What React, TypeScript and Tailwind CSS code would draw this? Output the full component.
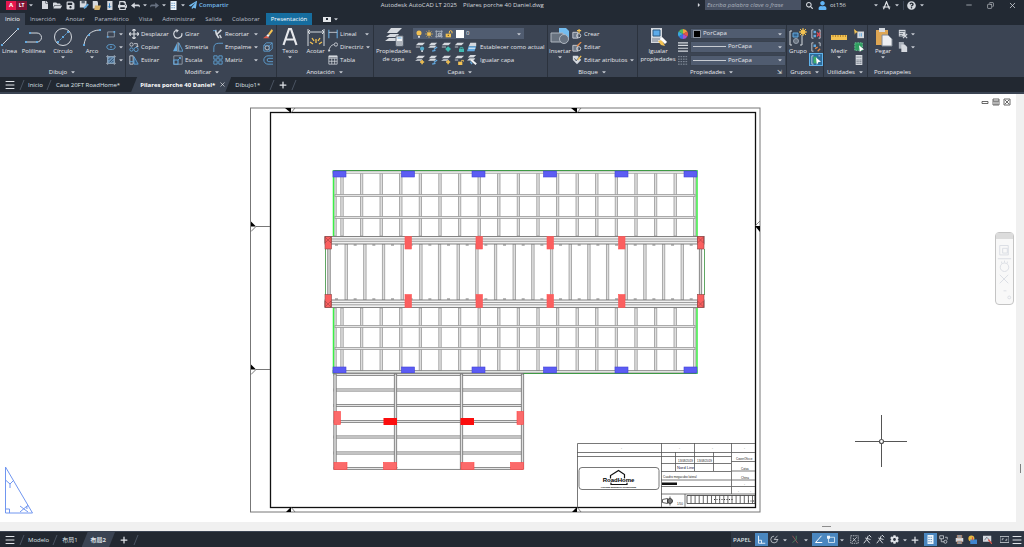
import React from 'react';
import {
  FaCaretDown,
  FaCaretRight,
  FaFolderOpen,
  FaFile,
  FaSave,
  FaPrint,
  FaPaperPlane,
  FaUser,
  FaSearch,
  FaQuestionCircle,
  FaCog,
} from 'react-icons/fa';
import { Menu, Plus, X, Minus, Copy } from 'lucide-react';

/* ---------- small drawings used by the ribbon ---------- */

const L = '#d5d9df';
const B = '#62a8de';
const Y = '#f3c253';

const icons: Record<string, React.ReactNode> = {
  rect: (
    <>
      <path d="M2 3.500h8v6H2z" stroke="#9aa3b0" />
      <path d="M1 8.500h2v2H1zM9 2.500h2v2H9z" fill={B} stroke="none" />
    </>
  ),
  ellipse: (
    <>
      <ellipse cx="6" cy="6" rx="5" ry="3" stroke={B} />
      <path d="M5 5.500h2v1H5zM5.500 5h1v2h-1z" fill={B} stroke="none" />
    </>
  ),
  hatch: (
    <>
      <path d="M2 2h8v8H2z" fill="#6b8fb3" stroke={B} />
      <path d="M0 2h12M0 10h12M2 0v12M10 0v12" stroke="#9aa3b0" />
      <path d="M3 6l3-3M4 9l5-5M7 9l2-2" stroke="#24405c" />
    </>
  ),
  move: <path d="M6 0v12M0 6h12M4 2l2-2 2 2M4 10l2 2 2-2M2 4L0 6l2 2M10 4l2 2-2 2" stroke={L} strokeWidth="1.4" />,
  copy: (
    <>
      <circle cx="3" cy="3" r="2" stroke={L} />
      <circle cx="3" cy="9" r="2" stroke={B} />
      <circle cx="8.500" cy="9" r="2.500" stroke={B} />
      <path d="M6 2h4v4M8.500 4.500L10 6l1.500-1.500" stroke={L} />
    </>
  ),
  stretch: (
    <>
      <path d="M1 1h4v10H1z" stroke={L} />
      <path d="M6 2l5 9H6z" fill="#34567a" stroke={B} />
      <path d="M1 8h4" stroke={B} />
    </>
  ),
  rotate: (
    <>
      <path d="M10.500 5A4.800 4.800 0 1 1 4 1.600" stroke={L} strokeWidth="1.400" />
      <path d="M3 0l4 1.500L4.500 4.500z" fill={L} stroke="none" />
    </>
  ),
  mirror: (
    <>
      <path d="M5 1v10H0z" fill={B} stroke="none" />
      <path d="M7 1v10h5z" stroke={B} />
      <path d="M6 0v12" stroke={L} strokeWidth=".7" />
    </>
  ),
  scale: (
    <>
      <path d="M1 1h10v10H1z" stroke="#9aa3b0" />
      <path d="M1 6h5v5H1z" stroke={B} strokeWidth="1.300" />
      <path d="M6 6l3-3M7 3h2v2" stroke={B} />
    </>
  ),
  trim: (
    <>
      <path d="M3 1l1 5 3 5M10 1L5 6" stroke={L} strokeWidth="2" />
      <path d="M8 7l2 4" stroke={L} strokeWidth="1.600" />
      <path d="M0 2h4" stroke={B} />
    </>
  ),
  fillet: <path d="M1 12V7q0-5.500 6-5.500h5" stroke={B} />,
  array: (
    <path d="M1 1h4v4H1zM7 1h4v4H7zM1 7h4v4H1zM7 7h4v4H7z" stroke={B} />
  ),
  erase: (
    <>
      <path d="M10.500 0L6 6l2 1.500L12 2z" fill={Y} stroke="none" />
      <path d="M6 6L4 8l2 2 2-2.500z" fill="#f4f4f4" stroke="none" />
      <path d="M0 11h8L4 8z" fill="#e25b4a" stroke="none" />
    </>
  ),
  explode: (
    <>
      <path d="M1 4l3-3h7v7l-3 3H1z" stroke={B} />
      <circle cx="5" cy="7" r="2.500" stroke={L} />
      <path d="M8 4v7M1 4h7l3-3" stroke={B} strokeWidth=".8" />
    </>
  ),
  offset: <path d="M12 1H6a5 5 0 0 0 0 10h6M12 4H7a2 2 0 0 0 0 4h5" stroke={B} />,
  linear: (
    <>
      <path d="M1 1v10M11 1v10" stroke={B} strokeWidth="1.300" />
      <path d="M1 4h10" stroke={L} />
    </>
  ),
  leader: (
    <>
      <path d="M1 11Q2 4 7 3" stroke={L} />
      <circle cx="9.500" cy="3" r="2" stroke={L} />
      <path d="M0 9l1 3 2-2z" fill={L} stroke="none" />
    </>
  ),
  table: (
    <>
      <path d="M1 1h10v10H1zM1 4h10M1 7.500h10M4.500 4v7M8 4v7" stroke={L} strokeWidth=".9" />
      <path d="M1 1h10v2H1z" fill={L} stroke="none" />
    </>
  ),
  layer: (
    <>
      <path d="M4 1h8l-3 3H1z" fill={L} stroke="none" />
      <path d="M1 6h5" stroke={L} />
      <circle cx="8.500" cy="8" r="2.500" fill="#55a9c9" stroke="none" />
      <path d="M7.500 10h2v2h-2z" fill={L} stroke="none" />
    </>
  ),
  layerTeal: (
    <>
      <path d="M4 1h8l-3 3H1z" fill={L} stroke="none" />
      <path d="M1 6h5" stroke={L} />
      <path d="M5 8.500L8.500 5 12 8.500 8.500 12z" fill="#41b9b1" stroke="none" />
    </>
  ),
  layerLock: (
    <>
      <path d="M4 1h8l-3 3H1z" fill={L} stroke="none" />
      <path d="M1 6h4" stroke={L} />
      <path d="M6 8h6v4H6z" fill="#41b9b1" stroke="none" />
      <path d="M7.500 8V6.500h3V8" stroke="#41b9b1" />
    </>
  ),
  layerUnlock: (
    <>
      <path d="M4 1h8l-3 3H1z" fill={L} stroke="none" />
      <path d="M1 6h4" stroke={L} />
      <path d="M5 8h5v4H5z" fill={Y} stroke="none" />
      <path d="M9 8V6.500h2.500V8" stroke={Y} />
    </>
  ),
  layerYellow: (
    <>
      <path d="M4 1h8l-3 3H1zM3 5h6L7 7H0z" fill={L} stroke="none" />
      <path d="M6 8.500h5M8.500 6v5" stroke={Y} strokeWidth="1.800" />
    </>
  ),
  layerBlue: (
    <>
      <path d="M4 1h7L8 4H1zM3 4.500h7L8 7H0z" fill={L} stroke="none" />
      <path d="M7 9l4-3M5 11l4-1" stroke={B} strokeWidth="1.600" />
    </>
  ),
  layerMatch: (
    <>
      <path d="M4 0h7L8 3H1zM3 4h7L8 6.500H0z" fill={L} stroke="none" />
      <path d="M5 6l6 5" stroke="#f2f3f5" strokeWidth="2.400" />
      <path d="M4 8l2 3" stroke={B} strokeWidth="1.600" />
    </>
  ),
  layerSet: (
    <>
      <path d="M4 1h7v4H2z" fill={L} stroke="none" />
      <path d="M2 5h9l-2 6H0z" fill={B} stroke="none" />
      <path d="M2 7.500h8" stroke="#fff" />
    </>
  ),
  bulb: (
    <>
      <circle cx="6" cy="4.500" r="3.800" fill={Y} stroke="none" />
      <path d="M4.500 9h3v2.500h-3z" fill={L} stroke="none" />
    </>
  ),
  sun: (
    <>
      <circle cx="6" cy="6" r="2.800" fill={Y} stroke="none" />
      <path d="M6 0v12M0 6h12M2 2l8 8M10 2l-8 8" stroke={Y} strokeWidth=".9" />
    </>
  ),
  viewport: (
    <>
      <path d="M2 2h8v8H2zM0 2h12M2 0v12M10 0v12M0 10h12" stroke="#a9b2bf" strokeWidth=".9" />
      <circle cx="7" cy="7" r="2.400" fill="#7b8796" stroke={L} />
    </>
  ),
  unlock: (
    <>
      <path d="M1 5.500h8V11H1z" fill={Y} stroke="none" />
      <path d="M6.500 5V3a2 2 0 0 1 4 0v2" stroke={Y} strokeWidth="1.500" />
      <path d="M4 7h2v2H4z" fill="#80601c" stroke="none" />
    </>
  ),
  blockNew: (
    <>
      <path d="M1 4h6v7H1z" fill="#6d7887" stroke={L} />
      <circle cx="8" cy="8" r="2.500" stroke={L} />
      <path d="M6 2h5M8.500 0v5" stroke={Y} strokeWidth="1.400" />
    </>
  ),
  blockEdit: (
    <>
      <path d="M1 4h6v7H1z" fill="#6d7887" stroke={L} />
      <circle cx="8" cy="8" r="2.500" stroke={L} />
      <path d="M6 5l5-5" stroke="#e58c4b" strokeWidth="1.600" />
    </>
  ),
  attr: (
    <>
      <path d="M1 1h6l4 5-5 5-5-5z" fill={L} stroke="none" />
      <path d="M3 4l2 3 5-6" stroke="#39424f" />
      <path d="M7 6l4-5" stroke={Y} strokeWidth="1.500" />
    </>
  ),
  weights: (
    <path d="M0 1h12M0 4h12M0 7.500h12M0 11h12" stroke={L} strokeWidth="1.400" />
  ),
  linetypes: (
    <path d="M0 2h12M0 5h12M0 8h12M0 11h12" stroke="#98a1ae" strokeDasharray="2 1" />
  ),
  ungroup: (
    <>
      <path d="M3 1H1v10h2M9 1h2v10H9" stroke={L} />
      <path d="M3 2h3v3H3zM3 7h3v3H3z" fill={B} stroke="none" />
      <path d="M7 4l4 5M11 4L7 9" stroke="#dd4a52" strokeWidth="1.500" />
    </>
  ),
  groupEdit: (
    <>
      <path d="M3 1H1v10h2M9 1h2v4" stroke={L} />
      <path d="M3 3h3v3H3z" fill={B} stroke="none" />
      <path d="M5 8l3-2M8 11l3-3" stroke="#e0864a" strokeWidth="1.600" />
    </>
  ),
  groupSel: (
    <>
      <path d="M3 1H1v10h2M9 1h2" stroke={L} />
      <path d="M3 2h4v8H3z" fill="#3fae6b" stroke="none" />
      <path d="M6 3l6 5-3 .5L7 12z" fill="#fff" stroke="none" />
    </>
  ),
  quickSel: (
    <>
      <path d="M4 3h8v8H4z" fill={L} stroke="none" />
      <path d="M0 0l5 4-3 .5L1 7z" fill={Y} stroke="none" />
      <path d="M7 5v4M9 5v4" stroke={B} />
    </>
  ),
  selectAll: (
    <>
      <path d="M1 1h9v9H1z" fill="#2f9d5f" stroke="#6fd39a" strokeDasharray="2 1" />
      <path d="M6 4l6 5-3 .5L7 12z" fill="#fff" stroke="none" />
    </>
  ),
  calc: (
    <>
      <path d="M2 0h8v12H2z" fill={L} stroke="none" />
      <path d="M3 2.500h6M3 6h6M3 8h6M3 10h6" stroke="#59636f" strokeDasharray="1.500 .7" />
    </>
  ),
  cut: (
    <>
      <path d="M1 1h8v8H1z" fill={L} stroke="none" />
      <path d="M2 3h6M2 5.500h4M2 8h3" stroke="#59636f" />
      <path d="M6 6l5 5M11 6l-5 5" stroke={L} strokeWidth="1.300" />
    </>
  ),
  paper2: (
    <>
      <path d="M1 0h6v8H1z" fill="#aab1bb" stroke="none" />
      <path d="M4 3h4l3 3v6H4z" fill={L} stroke="none" />
    </>
  ),
  saveAs: (
    <>
      <path d="M1 1h8v8H1z" fill={L} stroke="none" />
      <path d="M3 1h4v3H3z" fill="#59636f" stroke="none" />
      <path d="M6 10l5-5" stroke={B} strokeWidth="2.400" />
    </>
  ),
  openWeb: (
    <>
      <path d="M1 0h6l1 2v8H1z" fill={L} stroke="none" />
      <path d="M4 6h8l-2 6H3z" fill="#d8b36a" stroke="none" />
    </>
  ),
  saveWeb: (
    <>
      <path d="M3 0h7v12H3z" fill={L} stroke="none" />
      <path d="M6 3v6M4 7l2 2 2-2" stroke="#2f80c4" strokeWidth="1.300" />
    </>
  ),
  undo: <path d="M0 6l5-4v2.500h5q2 0 2 4-1-1.500-3-1.500H5V10z" fill={L} stroke="none" />,
  redo: <path d="M12 6L7 2v2.500H2q-2 0-2 4 1-1.500 3-1.500h4V10z" fill="#667080" stroke="none" />,
  corner: <path d="M2 1v10h9M2 7h4v4" stroke="#eef5fb" strokeWidth="1.200" />,
  polar: (
    <>
      <path d="M10 6a4.500 4.500 0 1 1-4.500-4.500M5.500 6L10 1M5.500 6H11" stroke={L} />
    </>
  ),
  iso: (
    <>
      <path d="M2 1l7 10" stroke="#b3605e" />
      <path d="M7 1v5l-5 4" stroke="#56946a" />
    </>
  ),
  track: <path d="M10 1L2 10h9" stroke="#fff" strokeWidth="1.300" />,
  osnap: (
    <>
      <path d="M2 3h8v7H2z" stroke="#eef5fb" />
      <path d="M0 1h4v4H0z" fill="#eef5fb" stroke="none" />
    </>
  ),
  annoVis: (
    <>
      <path d="M1 1h10v10H1z" stroke={L} strokeDasharray="2 1" />
      <path d="M3 9l6-6M4 4l4 5" stroke={L} />
    </>
  ),
  person: (
    <>
      <path d="M7 1L5 6l-4 5M5 6l4 5M3 4l7 2M8 0l3 3" stroke={L} strokeWidth="1.300" />
    </>
  ),
  sheet: (
    <>
      <path d="M2 0h8v12H2z" fill="#eef5fb" stroke="none" />
      <path d="M3 3h6M3 6h6M3 9h6" stroke="#4a82b7" strokeDasharray="2 1" />
    </>
  ),
  nodes: (
    <>
      <path d="M1 1h5v4H1zM8 3h3v3M3 5v4h4" stroke={L} />
      <circle cx="8.500" cy="9" r="2" stroke={L} />
    </>
  ),
  globe: (
    <>
      <circle cx="4.500" cy="4.500" r="4" fill="#e6b942" stroke="none" />
      <path d="M3 6h9v6H3z" fill="#3f86cf" stroke="none" />
      <path d="M6 3v4" stroke="#d95448" strokeWidth="1.500" />
    </>
  ),
  image: (
    <>
      <path d="M0 1h11v8H0z" fill={L} stroke="none" />
      <path d="M2 7l3-4 3 3" stroke="#59636f" />
      <path d="M7 6l5 6" stroke="#d95448" strokeWidth="1.600" />
    </>
  ),
  clean: (
    <>
      <path d="M0 2h12v8H0z" stroke={L} />
      <path d="M3 7V5h2M9 5v2H7" stroke={L} />
    </>
  ),
  plot: (
    <>
      <path d="M1 4h10v5H1z" fill={L} stroke="none" />
      <path d="M3 0h6v4H3zM3 8h6v4H3z" fill="#8d97a4" stroke="#d98c5a" strokeWidth=".7" />
    </>
  ),
};

function Icon({ name, className = 'size-[10px]' }: { name: string; className?: string }) {
  return (
    <svg viewBox="0 0 12 12" fill="none" className={`shrink-0 ${className}`} aria-hidden="true">
      {icons[name]}
    </svg>
  );
}

function Caret({ className = '' }: { className?: string }) {
  return <FaCaretDown className={`size-[6px] shrink-0 text-[#c3c8d0] ${className}`} />;
}

/* ---------- ribbon building blocks ---------- */

function Panel({ title, className, arrow = true, corner = false, children }: {
  title: string;
  className: string;
  arrow?: boolean;
  corner?: boolean;
  children: React.ReactNode;
}) {
  return (
    <section className={`flex shrink-0 flex-col border-r border-[#2b323d] pt-[2px] ${className}`}>
      <div className="flex h-[39px]">{children}</div>
      <div className="flex h-[11px] items-center justify-center gap-[3px]">
        <span>{title}</span>
        {arrow && <Caret />}
        {corner && <span className="absolute right-1">⇲</span>}
      </div>
    </section>
  );
}

function BigButton({ label, arrow, className, children }: {
  label: string;
  arrow?: boolean;
  className: string;
  children: React.ReactNode;
}) {
  return (
    <button className={`flex shrink-0 flex-col items-center ${className}`}>
      <svg viewBox="0 0 20 20" fill="none" className="size-[20px] shrink-0">{children}</svg>
      <span className="leading-[8px]">{label}</span>
      {arrow && <Caret className="-my-px" />}
    </button>
  );
}

function Row({ icon, label, arrow }: { icon: string; label?: string; arrow?: boolean }) {
  return (
    <button className="flex h-[13px] items-center gap-[2px] whitespace-nowrap">
      <Icon name={icon} />
      {label && <span>{label}</span>}
      {arrow && <Caret className="ml-auto" />}
    </button>
  );
}

function Column({ className, children }: { className: string; children: React.ReactNode }) {
  return <div className={`flex shrink-0 flex-col ${className}`}>{children}</div>;
}

function PropSelect({ label, line }: { label: string; line?: boolean }) {
  return (
    <div className="flex h-[11px] flex-1 items-center border border-[#39424f] bg-[#505c70] px-[2px]">
      {line ? <span className="h-px w-[33px] bg-[#c8ccd2]" /> : <span className="size-[8px] border border-[#8a929e] bg-black" />}
      <select aria-label={label} className="min-w-0 flex-1 appearance-none bg-transparent pl-[2px] leading-[9px] outline-none">
        <option>PorCapa</option>
      </select>
      <Caret />
    </div>
  );
}

function Ribbon() {
  return (
    <div className="flex h-[52px] bg-[#3b4453] text-[#e6e8ec]">
      <Panel title="Dibujo" className="w-[126px]">
        <BigButton label="Línea" className="w-[19px]">
          <path d="M2 18L18 2" stroke={L} />
          <path d="M1 17h2v2H1zM17 1h2v2h-2z" fill={B} />
        </BigButton>
        <BigButton label="Polilínea" className="w-[29px]">
          <path d="M2 15h11a4 4 0 0 0 0-9H6" stroke={L} />
          <path d="M1 14h2v2H1zM12 14h2v2h-2zM5 5h2v2H5z" fill={B} />
        </BigButton>
        <BigButton label="Círculo" arrow className="w-[30px]">
          <circle cx="10" cy="10" r="8.500" stroke={L} />
          <path d="M5 15L15 5" stroke={B} strokeDasharray="2 1" />
          <path d="M9 9h2v2H9zM14 4h2v2h-2zM4 14h2v2H4z" fill={B} />
        </BigButton>
        <BigButton label="Arco" arrow className="w-[28px]">
          <path d="M2 18C3 9 9 3 18 3" stroke={L} />
          <path d="M1 17h2v2H1zM6 7h2v2H6zM17 2h2v2h-2z" fill={B} />
        </BigButton>
        <Column className="w-[18px]">
          <Row icon="rect" arrow />
          <Row icon="ellipse" arrow />
          <Row icon="hatch" arrow />
        </Column>
      </Panel>

      <Panel title="Modificar" className="w-[151px] pl-[3px]">
        <Column className="w-[44px]">
          <Row icon="move" label="Desplazar" />
          <Row icon="copy" label="Copiar" />
          <Row icon="stretch" label="Estirar" />
        </Column>
        <Column className="w-[40px]">
          <Row icon="rotate" label="Girar" />
          <Row icon="mirror" label="Simetría" />
          <Row icon="scale" label="Escala" />
        </Column>
        <Column className="mr-[4px] w-[46px]">
          <Row icon="trim" label="Recortar" arrow />
          <Row icon="fillet" label="Empalme" arrow />
          <Row icon="array" label="Matriz" arrow />
        </Column>
        <Column className="w-[11px]">
          <Row icon="erase" />
          <Row icon="explode" />
          <Row icon="offset" />
        </Column>
      </Panel>

      <Panel title="Anotación" className="w-[97px]">
        <BigButton label="Texto" arrow className="w-[26px]">
          <path d="M3.500 18L9 2h2l5.500 16M6 12.500h8" stroke="#e6e8ec" strokeWidth="2.200" />
        </BigButton>
        <BigButton label="Acotar" className="w-[25px]">
          <path d="M2 2v17M18 2v17M2 5h16M4 3L2 5l2 2M16 3l2 2-2 2" stroke={L} />
          <path d="M10 16v-4M7 17l-3-2M13 17l3-2M8 14l-2-3M12 14l2-3" stroke={Y} strokeWidth="1.300" />
        </BigButton>
        <Column className="w-[42px]">
          <Row icon="linear" label="Lineal" arrow />
          <Row icon="leader" label="Directriz" arrow />
          <Row icon="table" label="Tabla" />
        </Column>
      </Panel>

      <Panel title="Capas" className="w-[174px]">
        <BigButton label="Propiedades de capa" className="w-[39px]">
          <path d="M7 1h11l-5 5H3zM6 7h9l-2 3H2zM5 11h7v3H1z" fill={L} />
          <path d="M12 9h7v10h-7z" fill="#f1f3f5" stroke="#66707e" />
          <path d="M13.500 11h4" stroke={B} />
          <path d="M13 15h5M13 17h5" stroke="#66707e" />
        </BigButton>
        <Column className="flex-1">
          <div className="flex h-[13px] items-center">
            <div className="flex h-[11px] w-[111px] items-center gap-[2px] bg-[#505c70] px-[2px]">
              <Icon name="bulb" className="size-[8px]" />
              <Icon name="sun" className="size-[8px]" />
              <Icon name="viewport" className="size-[8px]" />
              <Icon name="unlock" className="mr-px size-[8px]" />
              <span className="size-[8px] shrink-0 bg-white" />
              <select aria-label="Capa actual" className="min-w-0 flex-1 appearance-none bg-transparent leading-[9px] outline-none">
                <option>0</option>
              </select>
              <Caret />
            </div>
          </div>
          <div className="flex h-[13px] items-center gap-[3px] pl-[2px] whitespace-nowrap">
            <Icon name="layer" />
            <Icon name="layerBlue" />
            <Icon name="layerTeal" />
            <Icon name="layerLock" />
            <Icon name="layerSet" />
            <span>Establecer como actual</span>
          </div>
          <div className="flex h-[13px] items-center gap-[3px] pl-[2px] whitespace-nowrap">
            <Icon name="layerYellow" />
            <Icon name="layerBlue" />
            <Icon name="layerYellow" />
            <Icon name="layerUnlock" />
            <Icon name="layerMatch" />
            <span>Igualar capa</span>
          </div>
        </Column>
      </Panel>

      <Panel title="Bloque" className="w-[90px]">
        <BigButton label="Insertar" arrow className="w-[24px]">
          <path d="M9 1h7l3 3v8H9z" fill="#74bdf0" />
          <path d="M1 6h12v9H1z" fill="#68727f" stroke="#aeb5bf" />
          <circle cx="14" cy="12" r="4.500" fill="#68727f" stroke="#aeb5bf" />
        </BigButton>
        <Column className="w-[63px]">
          <Row icon="blockNew" label="Crear" />
          <Row icon="blockEdit" label="Editar" />
          <Row icon="attr" label="Editar atributos" arrow />
        </Column>
      </Panel>

      <Panel title="Propiedades" corner className="relative w-[149px]">
        <BigButton label="Igualar propiedades" className="w-[40px]">
          <path d="M3 1h11v15H3z" fill={L} />
          <path d="M5 3h7v6H5z" fill="#5cabea" stroke="#2c5a82" />
          <path d="M4 12h8M4 14h6" stroke="#77808d" />
          <path d="M10 14l3 4 4 1-3-6z" fill={Y} />
          <path d="M13 11l5 5" stroke="#fff" strokeWidth="3" />
        </BigButton>
        <Column className="w-[12px]">
          <div className="flex h-[13px] items-center">
            <svg viewBox="0 0 12 12" className="size-[10px]">
              <path d="M6 6V0a6 6 0 0 1 5.200 3z" fill="#f0a33c" />
              <path d="M6 6l5.200-3a6 6 0 0 1 0 6z" fill="#e25649" />
              <path d="M6 6l5.200 3A6 6 0 0 1 6 12z" fill="#a750c9" />
              <path d="M6 6v6A6 6 0 0 1 .8 9z" fill="#3a72df" />
              <path d="M6 6L.8 9a6 6 0 0 1 0-6z" fill="#37aadd" />
              <path d="M6 6L.8 3A6 6 0 0 1 6 0z" fill="#51ba60" />
            </svg>
          </div>
          <Row icon="weights" />
          <Row icon="linetypes" />
        </Column>
        <div className="flex flex-1 flex-col gap-[2px] pt-px">
          <PropSelect label="Color de objeto" />
          <PropSelect label="Grosor de línea" line />
          <PropSelect label="Tipo de línea" line />
        </div>
      </Panel>

      <Panel title="Grupos" className="w-[37px]">
        <BigButton label="Grupo" className="w-[22px]">
          <path d="M4 4H2v14h2M14 8v10h-2" stroke={L} />
          <path d="M5 6h5v4H5z" fill="#35628c" stroke={B} />
          <circle cx="8" cy="14" r="2.500" fill="#6a7481" stroke="#98a1ae" />
          <path d="M15 1v8M11 5h8M12 2l6 6M18 2l-6 6" stroke={Y} />
          <circle cx="15" cy="5" r="2.500" fill={Y} />
        </BigButton>
        <Column className="w-[14px] items-center">
          <Row icon="ungroup" />
          <Row icon="groupEdit" />
          <span className="flex h-[13px] items-center border border-[#5fb3ec] bg-[#2e6d9c] px-px"><Row icon="groupSel" /></span>
        </Column>
      </Panel>

      <Panel title="Utilidades" className="w-[44px]">
        <BigButton label="Medir" arrow className="w-[30px]">
          <path d="M2 8h16v5H2z" fill={Y} />
          <path d="M4 8v2M6.500 8v2M9 8v2M11.500 8v2M14 8v2M16.500 8v2" stroke="#9c6c17" strokeWidth=".7" />
        </BigButton>
        <Column className="w-[12px]">
          <Row icon="quickSel" />
          <Row icon="selectAll" />
          <Row icon="calc" />
        </Column>
      </Panel>

      <section className="flex flex-1 flex-col pt-[2px]">
        <div className="flex h-[39px]">
          <BigButton label="Pegar" arrow className="w-[30px]">
            <path d="M3 3h12v15H3z" fill="#dda654" />
            <path d="M6 1h6v4H6z" fill={L} />
            <path d="M9 8h6l4 4v7H9z" fill="#edeff2" stroke="#828b97" />
          </BigButton>
          <Column className="w-[17px]">
            <Row icon="cut" arrow />
            <Row icon="paper2" arrow />
          </Column>
        </div>
        <div className="flex h-[11px] items-center pl-[6px]">Portapapeles</div>
      </section>
    </div>
  );
}

/* ---------- title bar and menu ---------- */

function QuickButton({ label, children }: { label: string; children: React.ReactNode }) {
  return (
    <button aria-label={label} className="flex w-[13px] items-center justify-center">{children}</button>
  );
}

function TitleBar() {
  return (
    <header className="flex h-[12px] items-center overflow-hidden pb-[2px] text-[#d5d9df]">
      <div className="flex items-center pl-[6px]">
        <div className="flex h-[9px] w-[21px] items-center text-[6px] font-bold text-white">
          <span className="flex h-full w-[10px] items-center justify-center bg-[#e5184f]">A</span>
          <span className="flex h-full flex-1 items-center justify-center bg-[#7f1436] text-[5px]">LT</span>
        </div>
        <Caret className="mr-[4px] ml-px" />
        <QuickButton label="Nuevo"><FaFile className="size-[8px]" /></QuickButton>
        <QuickButton label="Abrir"><FaFolderOpen className="size-[9px]" /></QuickButton>
        <QuickButton label="Guardar"><FaSave className="size-[9px]" /></QuickButton>
        <QuickButton label="Guardar como"><Icon name="saveAs" /></QuickButton>
        <QuickButton label="Abrir desde web"><Icon name="openWeb" className="size-[9px]" /></QuickButton>
        <QuickButton label="Guardar en web"><Icon name="saveWeb" className="size-[9px]" /></QuickButton>
        <QuickButton label="Trazar"><FaPrint className="size-[9px]" /></QuickButton>
        <QuickButton label="Deshacer"><Icon name="undo" className="size-[9px]" /></QuickButton>
        <Caret />
        <QuickButton label="Rehacer"><Icon name="redo" className="size-[9px]" /></QuickButton>
        <Caret />
        <QuickButton label="Hojas"><Icon name="sheet" className="size-[9px]" /></QuickButton>
        <Caret className="mr-[3px]" />
        <button className="flex items-center gap-[2px] font-semibold text-[#72b9ee]">
          <FaPaperPlane className="size-[8px]" />
          Compartir
        </button>
      </div>
      <h1 className="flex flex-1 justify-center gap-[6px] whitespace-nowrap">
        <span>Autodesk AutoCAD LT 2025</span>
        <span>Pilares porche 40 Daniel.dwg</span>
      </h1>
      <div className="flex items-center gap-[3px] pr-[7px]">
        <FaCaretRight className="size-[6px]" />
        <input
          aria-label="Buscar"
          placeholder="Escriba palabra clave o frase"
          className="h-[10px] w-[96px] bg-[#485163] px-[2px] italic outline-none placeholder:text-[#a9b0bb]"
        />
        <FaSearch className="mx-[2px] size-[7px]" />
        <FaUser className="size-[9px] text-[#62b4f5]" />
        <span className="w-[40px]">ot156</span>
        <Caret />
        <svg viewBox="0 0 12 12" fill="none" className="size-[9px]">
          <path d="M2 11L6 1l4 10M1 8h10" stroke="#e6e8ec" strokeWidth="1.500" />
        </svg>
        <Caret />
        <span className="h-[9px] w-px bg-[#3b4453]" />
        <FaQuestionCircle className="size-[9px]" />
        <Caret className="mr-[37px]" />
        <button aria-label="Minimizar"><Minus className="size-[8px]" /></button>
        <button aria-label="Restaurar" className="mx-[11px]"><Copy className="size-[7px] -scale-x-100" /></button>
        <button aria-label="Cerrar"><X className="size-[9px]" /></button>
      </div>
    </header>
  );
}

const menuTabs = ['Inserción', 'Anotar', 'Paramétrico', 'Vista', 'Administrar', 'Salida', 'Colaborar'];

function MenuTabs() {
  return (
    <nav className="flex h-[13px] items-end text-[#b9bfc9]">
      <button className="h-[12px] bg-[#3b4453] px-[5px] text-white">Inicio</button>
      {menuTabs.map((t) => (
        <button key={t} className="h-[12px] px-[5px]">{t}</button>
      ))}
      <button className="ml-px h-[12px] bg-[#166d9f] px-[5px] text-white">Presentación</button>
      <button aria-label="Minimizar cinta" className="ml-[11px] flex h-[12px] items-center gap-[2px]">
        <span className="flex h-[5px] w-[8px] items-center justify-center bg-[#e1e4e8]">
          <span className="size-[2px] bg-[#222933]" />
        </span>
        <Caret />
      </button>
    </nav>
  );
}

function Slash() {
  return (
    <svg viewBox="0 0 6 10" fill="none" className="h-[10px] w-[6px] shrink-0">
      <path d="M1 10L5 0" stroke="#4a5362" />
    </svg>
  );
}

const slanted = '[clip-path:polygon(6px_0,100%_0,calc(100%-6px)_100%,0_100%)]';

function DocumentTabs() {
  return (
    <nav className="flex h-[17px] items-center border-b-2 border-[#3b4453] bg-[#222831] text-[#dfe2e7]">
      <button aria-label="Menú" className="mr-[3px] ml-[4px]"><Menu className="size-[12px]" /></button>
      <Slash />
      <button className="px-[3px]">Inicio</button>
      <Slash />
      <button className="px-[4px]">Casa 20FT RoadHome*</button>
      <div className={`ml-[7px] flex h-full items-center gap-[4px] bg-[#3b4453] pr-[5px] pl-[9px] font-bold text-white ${slanted}`}>
        <button>Pilares porche 40 Daniel*</button>
        <button aria-label="Cerrar pestaña"><X className="size-[7px]" /></button>
      </div>
      <button className="pr-[9px] pl-[4px]">Dibujo1*</button>
      <Slash />
      <button aria-label="Nuevo dibujo" className="px-[3px]"><Plus className="size-[10px]" strokeWidth={3} /></button>
      <Slash />
    </nav>
  );
}

/* ---------- drawing sheet ---------- */

const roofBeams = [342, ...Array.from({ length: 18 }, (_, i) => 361.6 + i * 19.6)];
const midBeams = Array.from({ length: 19 }, (_, i) => 346.2 + i * 18.67);
const bluePosts = [333, 401.500, 472, 543.500, 615, 684];
const redPosts = [325, 405, 476, 547, 618.500, 697.500];

function VBeam({ x, y1, y2, dark }: { x: number; y1: number; y2: number; dark?: boolean }) {
  return <rect x={x - 1.2} y={y1} width="2.400" height={y2 - y1} fill="#dedede" stroke={dark ? '#707070' : '#9a9a9a'} strokeWidth=".8" />;
}

function HBeam({ y, x1, x2, dark }: { y: number; x1: number; x2: number; dark?: boolean }) {
  return <rect x={x1} y={y - 1.1} width={x2 - x1} height="2.200" fill="#e4e4e4" stroke={dark ? '#777' : '#9a9a9a'} strokeWidth=".8" />;
}

function Sheet() {
  return (
    <svg viewBox="0 94 1016 428" className="h-full w-full" fontFamily="'Liberation Sans', sans-serif">
      {/* paper frame with centring marks */}
      <rect x="250.500" y="108" width="509.500" height="404" fill="none" stroke="#777" />
      <rect x="270.500" y="112.500" width="485" height="395" fill="none" stroke="#111" strokeWidth="1.300" />
      {[291, 577].map((x) => (
        <g key={x}>
          <path d={`M${x - 6} 108h6v5z`} />
          <path d={`M${x} 113l4-5`} stroke="#555" strokeWidth=".7" />
          <path d={`M${x - 5} 512l5-5v5z`} />
          <path d={`M${x} 507l4 5`} stroke="#555" strokeWidth=".7" />
        </g>
      ))}
      {[226.500, 369.500].map((y) => (
        <g key={y}>
          <path d={`M251 ${y - 5}l5 5h-5z`} />
          <path d={`M251 ${y + 5}l5-5H270`} fill="none" stroke="#555" strokeWidth=".8" />
        </g>
      ))}
      <path d="M760 226v6l-5-6z" />
      <path d="M755 226l5-5" stroke="#555" strokeWidth=".7" />

      {/* upper and lower roof bays */}
      {roofBeams.map((x) => (
        <g key={x}>
          <VBeam x={x} y1={173} y2={236} />
          <VBeam x={x} y1={308} y2={371} />
        </g>
      ))}
      <VBeam x={335} y1={173} y2={236} />
      <VBeam x={335} y1={308} y2={371} />
      {[195.500, 217.500, 326.500, 348.500].map((y) => (
        <HBeam key={y} y={y} x1={335} x2={695} />
      ))}
      <rect x="333" y="171" width="364" height="2.500" fill="#e2e5e2" stroke="#999" strokeWidth=".6" />
      <rect x="333" y="370.500" width="364" height="2.500" fill="#e2e5e2" stroke="#777" strokeWidth=".7" />
      <path d="M333 170.500h364M523 373.500h174" stroke="#3f9a45" />
      <path d="M333.500 170v66M333.500 308v66M697 170v66M697 308v66" stroke="#3cf046" strokeWidth="1.500" />

      {/* central corridor */}
      {midBeams.map((x) => (
        <VBeam key={x} x={x} y1={244} y2={300} />
      ))}
      <VBeam x={329} y1={244} y2={300} dark />
      <VBeam x={700.500} y1={244} y2={300} dark />
      {[236.500, 300].map((y) => (
        <g key={y}>
          <rect x="325" y={y} width="379" height="7.500" fill="#f1f1f1" stroke="#777" strokeWidth=".9" />
          <path d={`M325 ${y + 2.500}h379M325 ${y + 4.800}h379`} stroke="#8c8c8c" strokeWidth=".8" />
        </g>
      ))}
      <path d="M335 245h365M335 299h365" stroke="#777" strokeDasharray="3 15.670" />
      <path d="M325.500 249v46M704.500 249v46" stroke="#4e9d52" strokeWidth=".9" />

      {/* posts */}
      {bluePosts.map((x) => (
        <g key={x} fill="#5c5cf4" stroke="#4343d8" strokeWidth=".6">
          <rect x={x} y="171" width="13" height="6" />
          <rect x={x} y="367" width="13" height="6" />
        </g>
      ))}
      {redPosts.map((x, i) => (
        <g key={x} fill="#fb5f5f" stroke={i % 5 ? '#f55' : '#8c4444'} strokeWidth=".6">
          <rect x={x} y="236.500" width="6.500" height="12.500" />
          <rect x={x} y="294.500" width="6.500" height="13" />
        </g>
      ))}
      {[325, 697.500].map((x) => (
        <path key={x} d={`M${x} 237l6 6v-6l-6 6zM${x} 301l6 6v-6l-6 6z`} fill="none" stroke="#a04444" strokeWidth=".6" />
      ))}

      {/* terrace */}
      {[374.500, 390, 405.500, 421.500, 437, 453, 468.500].map((y) => (
        <HBeam key={y} y={y} x1={334} x2={522.500} dark />
      ))}
      <path d="M397.500 467h63v1.800h-63z" fill="#fff" />
      {[335, 395.500, 461.500, 522.500].map((x) => (
        <VBeam key={x} x={x} y1={374} y2={469} dark />
      ))}
      <g fill="#fb6a6a" stroke="#f44" strokeWidth=".6">
        {[334, 517].map((x) => (
          <rect key={x} x={x} y="411.500" width="6.500" height="13" />
        ))}
        {[334, 383.500, 461, 510.500].map((x) => (
          <rect key={x} x={x} y="462.500" width="13" height="7" />
        ))}
      </g>
      <g fill="#fb0d0d">
        <rect x="383.500" y="418" width="13.500" height="7" />
        <rect x="460.500" y="418" width="13.500" height="7" />
      </g>

      {/* title block */}
      <g fill="none" stroke="#555" strokeWidth=".8">
        <path d="M577.500 507V443.500H755M577 452.500h154.500M577 456.500h154.500M661.500 443v64M675.500 452v19M694.500 443v28M713.500 452v19M731.500 443v51" />
        <path d="M661 463.500h70M661 471.500h70M661 480h70M661 486.500h70M661 494h94M731.500 452.500H755M731.500 461.500H755M731.500 471H755M731.500 480H755M731.500 486.500H755M685 494v13" />
        <rect x="579" y="467.500" width="80" height="22" rx="3" />
      </g>
      <path d="M610.500 478.500v-3l8-5 6 4v4M611 482.500v2h16v-2" fill="none" stroke="#111" strokeWidth="1.200" />
      <text x="618.500" y="481.500" textAnchor="middle" fontSize="6" fontWeight="700" stroke="#fff" strokeWidth=".8" paintOrder="stroke">RoadHome</text>
      <text x="618.500" y="488" textAnchor="middle" fontSize="2" fontWeight="700">Viviendas modulares y prefabricadas</text>
      <g fontSize="3" fill="#222">
        <text x="678" y="461.500">13/08/2019</text>
        <text x="697" y="461.500">13/08/2019</text>
        <text x="677" y="469" fontSize="4" fill="#224">Nord Line</text>
        <text x="663" y="478">Cuadro megacubo lateral</text>
        <text x="736" y="460">CoverOficce</text>
        <text x="741" y="469.500">Cotas</text>
        <text x="741" y="478.500">China</text>
        <text x="677" y="505">1/50</text>
        <text x="621" y="449">-</text>
        <text x="679" y="449">-</text>
        <text x="712" y="449">-</text>
        <text x="744" y="449">-</text>
        <text x="744" y="485">-</text>
        <text x="738" y="492">-</text>
        <text x="750" y="492">-</text>
      </g>
      <path d="M662 482.500h15v2.500h-15z" fill="#111" />
      <path d="M662.500 499.500l5-1v5l-5-1zM670 496.500v9M667 501h6" fill="none" stroke="#333" strokeWidth=".8" />
      <circle cx="670" cy="501" r="2.500" fill="#777" stroke="#222" strokeWidth=".7" />
      <path d="M687 495.500h68v8h-68z" fill="none" stroke="#333" strokeWidth=".8" />
      {Array.from({ length: 16 }, (_, i) => (
        <path key={i} d={`M${691 + i * 4.1} 495.500v8`} stroke="#444" strokeWidth=".8" />
      ))}
      <path d="M714 499.500h20M748 501h7" stroke="#333" strokeDasharray="1 1.500" />
    </svg>
  );
}

function Canvas() {
  return (
    <main className="flex min-h-0 flex-1 flex-col bg-white">
      <div className="flex min-h-0 flex-1">
        <div className="relative min-w-0 flex-1">
          <Sheet />
          <div className="absolute top-[4px] right-[5px] flex items-center gap-[3px] text-[#444]">
            <button aria-label="Minimizar vista"><svg viewBox="0 0 8 8" fill="none" className="size-[8px]"><path d="M1 3.500h6v2H1z" stroke="currentColor" strokeWidth=".8" /></svg></button>
            <button aria-label="Restaurar vista"><svg viewBox="0 0 8 8" fill="none" className="size-[8px]"><path d="M1 1h6v6H1zM1 3h6M3 3v4M5 3v4" stroke="currentColor" strokeWidth=".8" /></svg></button>
            <button aria-label="Cerrar vista"><svg viewBox="0 0 8 8" fill="none" className="size-[8px]"><path d="M1 1h6v6H1zM2 2l4 4M6 2L2 6" stroke="currentColor" strokeWidth=".8" /></svg></button>
          </div>
          {/* navigation bar */}
          <div className="absolute top-[138px] right-[2px] h-[73px] w-[19px] rounded-sm border border-[#c4c4c4] bg-[#f8f8f8]">
            <div className="h-[6px] bg-[#dcdcdc]" />
            <svg viewBox="0 0 18 64" fill="none" className="h-[64px] w-full" stroke="#dadde3">
              <path d="M4 5h9v10H4zM7 8h5v5H7z" />
              <path d="M2 19h14" />
              <circle cx="9" cy="28" r="4.500" />
              <path d="M6 24v-2M9 23v-2M12 24v-2M4 36l9 9M13 36l-9 9M8 53h3" />
              <circle cx="14" cy="60" r="1.500" />
            </svg>
          </div>
          {/* coordinate symbol */}
          <svg viewBox="0 0 30 50" fill="none" stroke="#7096f0" className="absolute bottom-[7px] left-[4px] h-[50px] w-[30px]">
            <path d="M1.500 2v46h27zM1.500 44h4v4M1.500 15l4.500 4 4-4M6 19v4M16 41l8 6M23 41l-7 6" />
            <path d="M24 40q-2 2-1 4" />
          </svg>
          {/* cursor */}
          <svg viewBox="0 0 52 52" fill="none" stroke="#555" className="absolute right-[109px] bottom-[55px] size-[52px]">
            <path d="M0 26.500h24M29 26.500h23M26.500 0v24M26.500 29v23" />
            <circle cx="26.500" cy="26.500" r="2" strokeWidth="1.200" />
          </svg>
        </div>
        <div className="flex w-[8px] items-end justify-center bg-[#f0f0f0] pb-[49px]">
          <span className="h-[9px] w-px bg-[#808080]" />
        </div>
      </div>
      <div className="flex h-[9px] items-center justify-end bg-[#f0f0f0] pr-[193px]">
        <span className="h-px w-[9px] bg-[#8c8c8c]" />
      </div>
    </main>
  );
}

/* ---------- status bar ---------- */

function Status({ icon, on, arrow }: { icon: string; on?: boolean; arrow?: boolean }) {
  return (
    <>
      <button className={`flex h-[13px] w-[13px] items-center justify-center ${on ? 'bg-[#4a87c0]' : ''}`}>
        <Icon name={icon} className="size-[9px]" />
      </button>
      {arrow && <Caret className="mx-px" />}
    </>
  );
}

function StatusBar() {
  return (
    <footer className="flex h-[16px] items-center justify-between border-t border-[#3b4453] bg-[#222831] text-[#dfe2e7]">
      <nav className="flex h-full items-center">
        <button aria-label="Presentaciones" className="mr-[3px] ml-[4px]"><Menu className="size-[12px]" /></button>
        <Slash />
        <button className="px-[3px]">Modelo</button>
        <Slash />
        <button className="px-[4px]">布局1</button>
        <button className={`flex h-full items-center bg-[#3b4453] px-[9px] font-bold ${slanted}`}>布局2</button>
        <button aria-label="Nueva presentación" className="mx-[4px]"><Plus className="size-[10px]" strokeWidth={3} /></button>
        <Slash />
      </nav>
      <div className="flex h-full items-center bg-[#2d3542] pr-px pl-[2px]">
        <button className="mr-[4px] font-semibold">PAPEL</button>
        <Status icon="corner" on />
        <Status icon="polar" arrow />
        <Status icon="iso" arrow />
        <span className="w-[2px]" />
        <Status icon="track" on />
        <Status icon="osnap" on arrow />
        <span className="w-[2px]" />
        <Status icon="annoVis" />
        <Status icon="person" />
        <Status icon="person" />
        <button aria-label="Espacio de trabajo" className="mx-[3px]"><FaCog className="size-[9px]" /></button>
        <Caret className="mr-[2px]" />
        <button aria-label="Añadir" className="mr-[4px]"><Plus className="size-[10px]" strokeWidth={3} /></button>
        <Status icon="sheet" on />
        <Status icon="nodes" />
        <span className="w-[3px]" />
        <Status icon="plot" />
        <Status icon="globe" />
        <span className="w-[2px]" />
        <Status icon="image" />
        <span className="w-[4px]" />
        <Status icon="clean" />
        <button aria-label="Personalización"><Menu className="size-[12px]" /></button>
      </div>
    </footer>
  );
}

export default function App() {
  return (
    <div className="flex h-screen flex-col overflow-hidden bg-[#222933] font-['Open_Sans','Noto_Sans_CJK_SC',sans-serif] text-[6px] leading-[8px]">
      <TitleBar />
      <MenuTabs />
      <Ribbon />
      <DocumentTabs />
      <Canvas />
      <StatusBar />
    </div>
  );
}
